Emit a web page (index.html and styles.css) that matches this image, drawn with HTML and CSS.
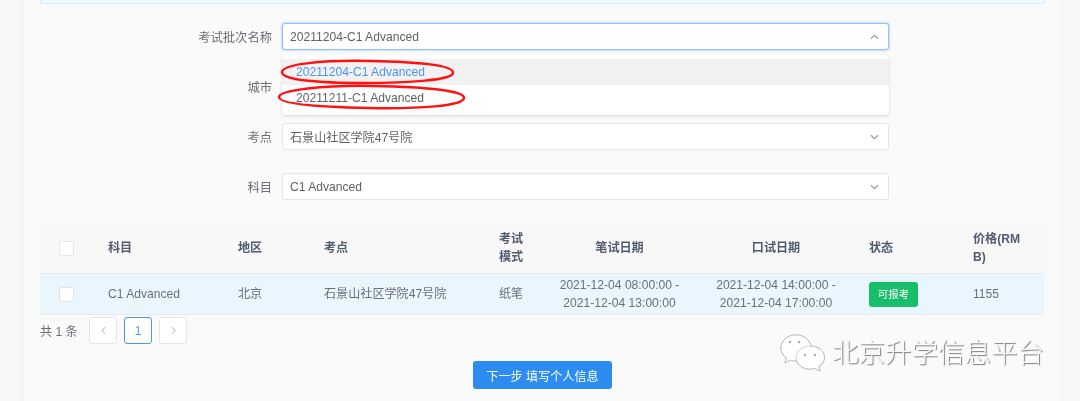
FILE: index.html
```html
<!DOCTYPE html>
<html lang="zh">
<head>
<meta charset="utf-8">
<title>考试报名</title>
<link rel="stylesheet" href="styles.css">
</head>
<body>
<div class="page">
  <main class="panel">
    <div class="alert"></div>
    <form class="form">
      <div class="row">
        <label class="label">考试批次名称</label>
        <div class="control">
          <div class="select focus"><span>20211204-C1 Advanced</span>
            <svg class="chev" viewBox="0 0 10 6"><path d="M1 5L5 1.2L9 5"/></svg>
          </div>
          <div class="dropdown">
            <div class="option active">20211204-C1 Advanced</div>
            <div class="option">20211211-C1 Advanced</div>
            <svg class="marks" viewBox="0 0 200 62">
              <path d="M3 17C4 9 44 5 90 6C140 7 175 10 174 18C173 25 130 28 85 28C40 28 2 25 3 17Z"/>
              <path d="M0 42C0 35 45 30 95 31C150 32 186 36 185 43C184 51 140 54 90 53C40 52 0 49 0 42Z"/>
            </svg>
          </div>
        </div>
      </div>
      <div class="row">
        <label class="label">城市</label>
        <div class="control"><div class="select"></div></div>
      </div>
      <div class="row">
        <label class="label">考点</label>
        <div class="control"><div class="select"><span>石景山社区学院47号院</span>
          <svg class="chev" viewBox="0 0 10 6"><path d="M1 1L5 4.8L9 1"/></svg></div></div>
      </div>
      <div class="row">
        <label class="label">科目</label>
        <div class="control"><div class="select"><span>C1 Advanced</span>
          <svg class="chev" viewBox="0 0 10 6"><path d="M1 1L5 4.8L9 1"/></svg></div></div>
      </div>
    </form>
    <table class="table">
      <colgroup>
        <col class="c-check"><col class="c-subject"><col class="c-area"><col class="c-site"><col class="c-mode"><col class="c-date"><col class="c-date2"><col class="c-state"><col class="c-price">
      </colgroup>
      <thead>
        <tr>
          <th class="center"><span class="check"></span></th>
          <th>科目</th>
          <th>地区</th>
          <th>考点</th>
          <th>考试<br>模式</th>
          <th class="center">笔试日期</th>
          <th class="center">口试日期</th>
          <th class="state">状态</th>
          <th>价格(RM<br>B)</th>
        </tr>
      </thead>
      <tbody>
        <tr>
          <td class="center"><span class="check"></span></td>
          <td>C1 Advanced</td>
          <td>北京</td>
          <td>石景山社区学院47号院</td>
          <td>纸笔</td>
          <td class="center">2021-12-04 08:00:00 -<br>2021-12-04 13:00:00</td>
          <td class="center">2021-12-04 14:00:00 -<br>2021-12-04 17:00:00</td>
          <td class="state"><span class="badge">可报考</span></td>
          <td>1155</td>
        </tr>
      </tbody>
    </table>
    <nav class="pager">
      <span class="total">共 1 条</span>
      <a class="page-btn"><svg class="arrow" viewBox="0 0 6 10"><path d="M5 1L1 5L5 9"/></svg></a>
      <a class="page-btn current">1</a>
      <a class="page-btn"><svg class="arrow" viewBox="0 0 6 10"><path d="M1 1L5 5L1 9"/></svg></a>
    </nav>
    <div class="actions"><button class="next" type="button">下一步 填写个人信息</button></div>
  </main>
  <div class="watermark">
    <svg class="wechat" viewBox="0 0 46 38">
      <path class="bubble" d="M16 1C7.500 1 1 6.800 1 14C1 18 3 21.500 6.500 24L5 29L10.500 26C12.500 26.700 14.500 27 16.500 27C24 27 31 21 31 14C31 6.800 24.500 1 16 1Z"/>
      <path class="bubble" d="M30 12C22 12 16 17 16 23.500C16 30 22 35 30 35C32 35 33.500 34.700 35 34.200L40 37L38.800 32.500C42.300 30.200 44.500 27 44.500 23.500C44.500 17 38 12 30 12Z"/>
      <circle class="eye" cx="10" cy="8" r="1.200"/><circle class="eye" cx="19" cy="8" r="1.200"/>
      <circle class="eye" cx="25" cy="21" r="1.200"/><circle class="eye" cx="35" cy="21" r="1.200"/>
    </svg>
    <span class="wm-text">北京升学信息平台</span>
  </div>
</div>
</body>
</html>
```
FILE: styles.css
```css
html, body { margin: 0; padding: 0; }
body {
  width: 1080px;
  height: 401px;
  overflow: hidden;
  background: #f5f7f9;
  font-family: "Liberation Sans", "Noto Sans CJK SC", sans-serif;
  font-size: 12.1px;
  color: #606266;
}
.page {
  position: relative;
  height: 401px;
  padding-left: 22px;
  filter: blur(0.4px);
}
.panel {
  box-sizing: border-box;
  width: 1038px;
  height: 401px;
  padding: 0 15px 0 17px;
  background: #fafafa;
  border-left: 1px solid #e8ecf3;
}
.alert {
  box-sizing: border-box;
  width: 1005px;
  height: 4px;
  background: #f0faff;
  border: 1px solid #d5eeff;
  border-top: 0;
  border-radius: 0 0 3px 3px;
}
.form {
  display: flex;
  flex-direction: column;
  gap: 23px;
  margin-top: 19px;
}
.row { display: flex; align-items: center; }
.label {
  width: 242px;
  padding-right: 10px;
  box-sizing: border-box;
  text-align: right;
  font-size: 12.3px;
  color: #6b6e75;
}
.control { position: relative; width: 607px; }
.select {
  box-sizing: border-box;
  height: 27px;
  padding: 0 7px;
  display: flex;
  align-items: center;
  justify-content: space-between;
  background: #fff;
  border: 1px solid #e3e5e8;
  border-radius: 3px;
}
.select.focus {
  border-color: #8cc2fb;
  box-shadow: 0 0 2px 1px rgba(45, 140, 240, .25);
}
.chev {
  width: 9px;
  height: 6px;
  margin-right: 2px;
  fill: none;
  stroke: #9a9eab;
  stroke-width: 1.400;
}
.dropdown {
  position: absolute;
  z-index: 5;
  top: 32px;
  left: 0;
  right: 0;
  padding: 4px 0;
  background: #fff;
  border-radius: 3px;
  box-shadow: 0 1px 3px rgba(0, 0, 0, .16);
}
.option {
  height: 26px;
  line-height: 26px;
  padding-left: 14px;
}
.option.active { background: #f2f2f2; color: #4d94f2; }
.marks {
  position: absolute;
  top: 0;
  left: -3px;
  width: 200px;
  height: 62px;
  overflow: visible;
}
.marks path { fill: none; stroke: #f11; stroke-width: 2.5; }
.table {
  table-layout: fixed;
  width: 1004px;
  margin-top: 23px;
  border-collapse: collapse;
}
.c-check { width: 58px; }
.c-subject { width: 130px; }
.c-area { width: 86px; }
.c-site { width: 175px; }
.c-mode { width: 54px; }
.c-date { width: 153px; }
.c-date2 { width: 160px; }
.c-state { width: 107px; }
.c-price { width: 81px; }
th, td {
  padding: 0 10px;
  text-align: left;
  line-height: 18.500px;
  border-bottom: 1px solid #e8eaec;
}
th {
  height: 50px;
  background: #f8f8f9;
  font-weight: 700;
  color: #515a6e;
}
td { height: 40px; background: #e9f6fe; color: #6a6f78; }
th.center, td.center { text-align: center; }
th.state, td.state { padding-left: 13px; }
.check {
  display: block;
  width: 13px;
  height: 13px;
  margin: 0 auto;
  background: #fff;
  border: 1px solid #e3e5e8;
  border-radius: 2px;
  transform: translateX(-3px);
}
.badge {
  display: inline-block;
  width: 49px;
  height: 25px;
  line-height: 24px;
  text-align: center;
  background: #19be6b;
  color: #fff;
  border-radius: 3px;
  font-size: 10.500px;
  vertical-align: middle;
}
.pager {
  display: flex;
  align-items: center;
  margin-top: 2px;
}
.total { width: 49px; color: #6a6f78; }
.page-btn {
  box-sizing: border-box;
  width: 28px;
  height: 27px;
  margin-right: 7px;
  display: flex;
  align-items: center;
  justify-content: center;
  background: #fff;
  border: 1px solid #e3e5e8;
  border-radius: 3px;
  color: #5a9cf0;
}
.page-btn.current { border-color: #4a97f0; }
.arrow {
  width: 5px;
  height: 9px;
  fill: none;
  stroke: #c5c8ce;
  stroke-width: 1.300;
}
.actions { display: flex; justify-content: center; margin-top: 17px; }
.next {
  width: 139px;
  height: 28px;
  padding: 0;
  border: 0;
  border-radius: 3px;
  background: #2d8cf0;
  color: #fff;
  font: 12.1px "Liberation Sans", "Noto Sans CJK SC", sans-serif;
}
.watermark {
  position: absolute;
  top: 334px;
  left: 780px;
  display: flex;
  align-items: center;
}
.wechat {
  width: 46px;
  height: 38px;
  margin-right: 6px;
  filter: drop-shadow(0.5px 0.5px 0.5px #888);
}
.bubble { fill: #fff; stroke: #c4c4c4; stroke-width: .8; }
.eye { fill: #aaa; }
.wm-text {
  font-size: 26.500px;
  line-height: 38px;
  font-weight: 300;
  color: #fafafa;
  text-shadow: 1px 1px 1px #777;
  white-space: nowrap;
}
```
